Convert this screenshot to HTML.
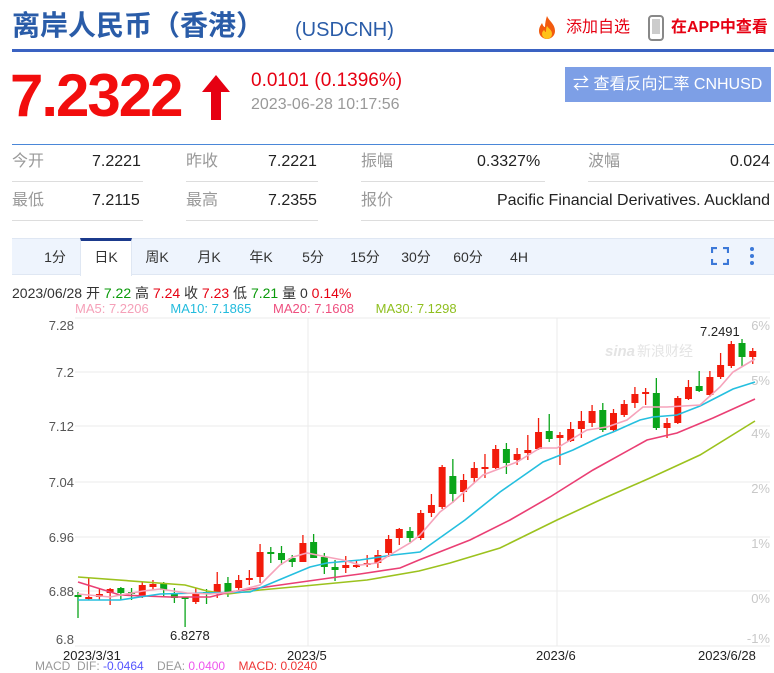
<!DOCTYPE html>
<html><head><meta charset="utf-8">
<style>
*{margin:0;padding:0;box-sizing:border-box}
body{width:774px;height:665px;overflow:hidden;background:#fff;font-family:"Liberation Sans","Noto Sans CJK SC",sans-serif;position:relative;color:#333}
.a{position:absolute;white-space:nowrap}
.title{left:12px;top:8px;font-size:28px;line-height:36px;font-weight:bold;color:#2a5ca8}
.code{left:295px;top:18px;font-size:20px;line-height:24px;color:#2a5ca8}
.red{color:#e60012}
.lab{color:#999;font-size:16px;line-height:20px}
.val{color:#222;font-size:16px;line-height:20px}
.ln{position:absolute;height:1px;background:#ddd}
.tab{position:absolute;top:239px;height:36px;line-height:36px;font-size:14px;color:#333;text-align:center}
</style></head><body>
<div class="a title">离岸人民币（香港）</div>
<div class="a code">(USDCNH)</div>
<svg class="a" style="left:535px;top:15px" width="24" height="26" viewBox="0 0 24 26"><path d="M12 1C14 6 20 9 20 16a8 8 0 0 1-16 0c0-4 2-6 3-8 1 3 2 4 3 4 0-4 1-8 2-11z" fill="#f25a0e"/><path d="M12 11c2 3 5 4 5 8a5 5 0 0 1-10 0c0-2 1-3 2-4 1 1 1 2 2 2 0-2 0-4 1-6z" fill="#ffc21a"/></svg>
<div class="a red" style="left:566px;top:18px;font-size:16px;line-height:20px">添加自选</div>
<svg class="a" style="left:648px;top:15px" width="16" height="26" viewBox="0 0 16 26"><rect x="1" y="1" width="14" height="24" rx="3" fill="none" stroke="#888" stroke-width="2"/><rect x="4" y="4" width="8" height="15" fill="#ccc"/></svg>
<div class="a red" style="left:671px;top:18px;font-size:16px;line-height:20px;font-weight:bold">在APP中查看</div>
<div class="a" style="left:12px;top:49px;width:762px;height:3px;background:#3a62c2"></div>

<div class="a" style="left:10px;top:64px;font-size:60px;line-height:64px;font-weight:bold;color:#f20d0d;letter-spacing:-2px">7.2322</div>
<svg class="a" style="left:200px;top:74px" width="32" height="46" viewBox="0 0 32 46"><path d="M16 1L30 18H21V46H11V18H2z" fill="#e60012"/></svg>
<div class="a red" style="left:251px;top:70px;font-size:19px;line-height:22px">0.0101 (0.1396%)</div>
<div class="a" style="left:251px;top:95px;font-size:16px;line-height:20px;color:#999">2023-06-28 10:17:56</div>
<div class="a" style="left:565px;top:67px;width:206px;height:35px;background:#7d9fe6;color:#fff;font-size:16px;line-height:35px;padding-left:8px">⇄ 查看反向汇率 CNHUSD</div>

<div class="ln" style="left:12px;top:144px;width:762px;background:#4a87d8"></div>
<div class="a lab" style="left:12px;top:152px">今开</div><div class="a val" style="left:92px;top:152px">7.2221</div>
<div class="a lab" style="left:186px;top:152px">昨收</div><div class="a val" style="left:268px;top:152px">7.2221</div>
<div class="a lab" style="left:361px;top:152px">振幅</div><div class="a val" style="left:477px;top:152px">0.3327%</div>
<div class="a lab" style="left:588px;top:152px">波幅</div><div class="a val" style="right:4px;top:152px">0.024</div>
<div class="ln" style="left:12px;top:181px;width:131px"></div><div class="ln" style="left:186px;top:181px;width:132px"></div><div class="ln" style="left:361px;top:181px;width:184px"></div><div class="ln" style="left:588px;top:181px;width:186px"></div>
<div class="a lab" style="left:12px;top:191px">最低</div><div class="a val" style="left:92px;top:191px">7.2115</div>
<div class="a lab" style="left:186px;top:191px">最高</div><div class="a val" style="left:268px;top:191px">7.2355</div>
<div class="a lab" style="left:361px;top:191px">报价</div><div class="a val" style="right:4px;top:191px">Pacific Financial Derivatives. Auckland</div>
<div class="ln" style="left:12px;top:220px;width:131px"></div><div class="ln" style="left:186px;top:220px;width:132px"></div><div class="ln" style="left:361px;top:220px;width:413px"></div>

<div class="a" style="left:12px;top:238px;width:762px;height:37px;background:#eef4fd;border-top:1px solid #dfe7f3;border-bottom:1px solid #dfe7f3"></div>
<div class="a" style="left:80px;top:238px;width:52px;height:38px;background:#fff;border-top:3px solid #1b3a8c;border-left:1px solid #dfe7f3;border-right:1px solid #dfe7f3"></div>
<div class="tab" style="left:30px;width:50px">1分</div>
<div class="tab" style="left:81px;width:50px">日K</div>
<div class="tab" style="left:132px;width:50px">周K</div>
<div class="tab" style="left:184px;width:50px">月K</div>
<div class="tab" style="left:236px;width:50px">年K</div>
<div class="tab" style="left:288px;width:50px">5分</div>
<div class="tab" style="left:340px;width:50px">15分</div>
<div class="tab" style="left:391px;width:50px">30分</div>
<div class="tab" style="left:443px;width:50px">60分</div>
<div class="tab" style="left:494px;width:50px">4H</div>
<svg class="a" style="left:711px;top:247px" width="18" height="18" viewBox="0 0 18 18" fill="none" stroke="#3b78d8" stroke-width="2.2"><path d="M1 6V1h5M12 1h5v5M17 12v5h-5M6 17H1v-5"/></svg>
<svg class="a" style="left:749px;top:246px" width="6" height="20"><circle cx="3" cy="3" r="2" fill="#3b78d8"/><circle cx="3" cy="10" r="2" fill="#3b78d8"/><circle cx="3" cy="17" r="2" fill="#3b78d8"/></svg>

<div class="a" style="left:12px;top:284px;font-size:14px;line-height:18px;color:#333">2023/06/28 开 <span style="color:#0a9a0a">7.22</span> 高 <span class="red">7.24</span> 收 <span class="red">7.23</span> 低 <span style="color:#0a9a0a">7.21</span> 量 0 <span class="red">0.14%</span></div>
<div class="a" style="left:75px;top:301px;font-size:13px;line-height:16px"><span style="color:#f5a0b8">MA5: 7.2206</span>&nbsp;&nbsp;&nbsp;&nbsp;&nbsp;&nbsp;<span style="color:#22bbdd">MA10: 7.1865</span>&nbsp;&nbsp;&nbsp;&nbsp;&nbsp;&nbsp;<span style="color:#ee4f7f">MA20: 7.1608</span>&nbsp;&nbsp;&nbsp;&nbsp;&nbsp;&nbsp;<span style="color:#8fbf1f">MA30: 7.1298</span></div>

<svg id="ch" class="a" style="left:0;top:0" width="774" height="665" font-family="Liberation Sans, sans-serif">
<g stroke="#ebebeb" stroke-width="1">
<line x1="75" y1="318" x2="770" y2="318"/><line x1="75" y1="372" x2="770" y2="372"/><line x1="75" y1="426" x2="770" y2="426"/><line x1="75" y1="482" x2="770" y2="482"/><line x1="75" y1="537" x2="770" y2="537"/><line x1="75" y1="591" x2="770" y2="591"/><line x1="75" y1="646" x2="770" y2="646"/>
<line x1="308" y1="318" x2="308" y2="646"/><line x1="557" y1="318" x2="557" y2="646"/>
</g>
<g font-size="13" fill="#555" text-anchor="end">
<text x="74" y="330">7.28</text><text x="74" y="377">7.2</text><text x="74" y="431">7.12</text><text x="74" y="487">7.04</text><text x="74" y="542">6.96</text><text x="74" y="596">6.88</text><text x="74" y="644">6.8</text>
</g>
<g font-size="13" fill="#c8c8c8" text-anchor="end">
<text x="770" y="330">6%</text><text x="770" y="385">5%</text><text x="770" y="438">4%</text><text x="770" y="493">2%</text><text x="770" y="548">1%</text><text x="770" y="603">0%</text><text x="770" y="643">-1%</text>
</g>
<text x="605" y="356" font-size="15" fill="#e4e4e4" font-style="italic" font-weight="bold">sina</text><text x="637" y="356" font-size="14" fill="#e4e4e4">新浪财经</text>
<g font-size="13" fill="#222"><text x="170" y="640">6.8278</text><text x="700" y="336">7.2491</text>
<text x="63" y="660">2023/3/31</text><text x="287" y="660">2023/5</text><text x="536" y="660">2023/6</text><text x="698" y="660">2023/6/28</text></g>
<g id="cd"></g>
<g fill="none" stroke-width="1.6">
<polyline stroke="#9cc21e" points="78,577 185,585 207,591 228,594 260,590 304,586 367,580 419,571 450,563 500,548 557,520 600,500 650,478 700,455 755,421"/>
<polyline stroke="#ea3f74" points="78,582 120,595 170,597 210,597 230,592 280,585 330,578 360,574 400,568 419,560 470,540 510,520 550,497 593,470 647,440 677,433 713,418 755,399"/>
<polyline stroke="#25bfdf" points="78,600 120,600 160,594 200,593 250,592 310,567 327,563 360,560 393,555 420,552 465,520 500,492 543,462 573,450 600,437 613,432 640,420 653,417 677,415 700,406 733,389 755,382"/>
<polyline stroke="#f6a3bb" points="78,594 110,597 143,591 160,589 187,593 210,594 233,592 260,585 280,565 293,557 307,553 327,557 343,560 360,565 377,563 393,553 410,543 420,535 440,512 453,502 483,475 517,462 540,448 557,448 587,430 607,427 627,420 643,407 667,407 700,405 720,387 733,372 755,359"/>
</g>
</svg>
<div class="a" style="left:35px;top:659px;font-size:12px;line-height:14px;color:#999">MACD&nbsp;&nbsp;DIF: <span style="color:#55f">-0.0464</span>&nbsp;&nbsp;&nbsp;&nbsp;DEA: <span style="color:#e5e">0.0400</span>&nbsp;&nbsp;&nbsp;&nbsp;<span style="color:#e33">MACD: 0.0240</span></div>
<script>
var d=[
['g',595,597,592,618],['r',597,599,578,600],['r',594,597,588,600],['r',589,593,588,605],['g',588,593,587,600],['g',592,594,588,600],['r',585,597,582,598],['r',584,587,580,590],['g',583,590,582,597],['g',593,598,588,603],
['g',597,598,597,627],['r',594,602,588,604],['g',592,593,589,604],['r',584,593,572,598],['g',583,592,577,597],['r',580,588,575,593],['r',578,580,570,585],['r',552,577,544,583],['g',552,553,547,563],['g',553,560,546,565],
['g',558,562,555,567],['r',543,562,535,562],['g',542,558,534,558],['g',557,567,553,574],['g',567,570,560,581],['r',565,568,556,573],['r',565,567,561,568],['r',563,565,555,567],['r',555,563,550,568],['r',539,553,535,557],
['r',529,538,528,545],['g',531,538,527,542],['r',513,538,510,540],['r',505,513,494,517],['r',467,507,465,509],['g',476,494,459,503],['r',480,492,474,502],['r',468,478,462,483],['r',467,469,454,478],['r',449,468,445,469],
['g',449,463,443,474],['r',454,460,448,465],['r',450,453,435,460],['r',432,449,418,450],['g',431,439,414,442],['r',435,438,432,465],['r',429,441,422,442],['r',421,429,411,438],['r',411,423,405,427],['g',410,430,403,432],
['r',413,430,409,432],['r',404,415,400,417],['r',394,403,387,408],['r',392,393,388,405],['g',393,428,378,430],['r',423,428,418,438],['r',398,423,396,424],['r',387,399,380,400],['g',386,391,371,392],['r',377,395,371,397],
['r',365,377,353,379],['r',344,366,341,368],['g',343,357,339,367],['r',351,357,348,364]];
var s='';for(var i=0;i<d.length;i++){var x=78+i*10.71,c=d[i][0]=='r'?'#f21b0b':'#0aa51a';
s+='<line x1="'+x+'" x2="'+x+'" y1="'+d[i][3]+'" y2="'+d[i][4]+'" stroke="'+c+'" stroke-width="1.3"/>';
var h=Math.max(2,d[i][2]-d[i][1]);s+='<rect x="'+(x-3.5)+'" y="'+d[i][1]+'" width="7" height="'+h+'" fill="'+c+'"/>';}
document.getElementById('cd').innerHTML=s;
</script>
</body></html>
